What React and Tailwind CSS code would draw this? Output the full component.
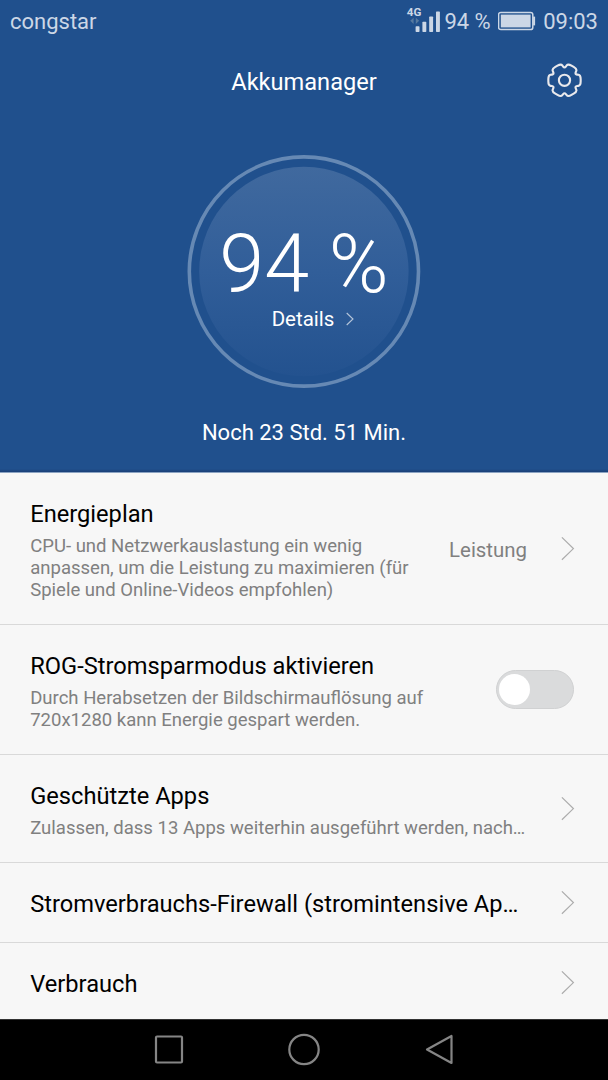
const ROWS = [
  {
    title: "Energieplan",
    text: "CPU- und Netzwerkauslastung ein wenig anpassen, um die Leistung zu maximieren (für Spiele und Online-Videos empfohlen)",
    value: "Leistung",
    height: "h-[153px] pt-px",
    width: "w-[390px] pt-1",
  },
  {
    title: "ROG-Stromsparmodus aktivieren",
    text: "Durch Herabsetzen der Bildschirmauflösung auf 720x1280 kann Energie gespart werden.",
    toggle: true,
    height: "h-[130px]",
    width: "w-[410px] pt-1",
  },
  {
    title: "Geschützte Apps",
    text: "Zulassen, dass 13 Apps weiterhin ausgeführt werden, nach…",
    height: "h-[108px]",
    width: "w-[510px] pt-1 whitespace-nowrap",
  },
  {
    title: "Stromverbrauchs-Firewall (stromintensive Ap…",
    height: "h-[80px]",
    width: "w-[510px] pt-[2px] whitespace-nowrap",
  },
  { title: "Verbrauch", height: "h-[76px] pt-[3px]", width: "w-[400px] pt-[2px]", last: true },
]

// Closed path through the points with softened corners
function softPath(points, cut) {
  const n = points.length
  return points.map(([x, y], i) => {
    const [px, py] = points[(i + n - 1) % n]
    const [nx, ny] = points[(i + 1) % n]
    const ax = x + (px - x) * cut
    const ay = y + (py - y) * cut
    const bx = x + (nx - x) * cut
    const by = y + (ny - y) * cut
    return `${i ? "L" : "M"}${ax} ${ay}Q${x} ${y} ${bx} ${by}`
  }).join("") + "Z"
}

const GEAR_POINTS = [0, 60, 120, 180, 240, 300].flatMap((deg) =>
  [[deg - 18, 17], [deg + 18, 17], [deg + 30, 12]].map(([a, r]) => [
    r * Math.cos((a * Math.PI) / 180),
    r * Math.sin((a * Math.PI) / 180),
  ])
)

function Gear() {
  return (
    <svg width="36" height="36" viewBox="-17.5 -17.3 36 36" fill="none" stroke="#e9e9ec" strokeWidth="2.1">
      <path d={softPath(GEAR_POINTS, 0.38)} />
      <circle r="5.6" />
    </svg>
  )
}

function Chevron() {
  return (
    <svg className="shrink-0" width="14" height="24" viewBox="0.6 0.4 14 24" fill="none" stroke="#acacac" strokeWidth="1.2">
      <path d="M1.5 .8 13 12 1.5 23.2" />
    </svg>
  )
}

function Signal() {
  return (
    <svg width="36" height="30" viewBox="-1.8 -1.3 36 30" fill="#ccd7e6">
      <text x="-1" y="9.1" fontFamily="Roboto" fontSize="11.6" fontWeight="700">4G</text>
      <path d="M5.8 10.5v6.2L2.4 13.5zM8 10.5v6.2l3.4-3.2z" fill="#56799f" />
      <rect x="7.8" y="19" width="3.9" height="5.6" rx=".7" />
      <rect x="14.6" y="14.5" width="3.9" height="10.1" rx=".7" />
      <rect x="21.4" y="9.2" width="3.9" height="15.4" rx=".7" />
      <rect x="28.2" y="4.2" width="3.9" height="20.4" rx=".7" />
    </svg>
  )
}

function Battery() {
  return (
    <svg width="38" height="20" viewBox="0.4 -0.2 38 20" fill="none">
      <rect x="1" y="1.2" width="34.2" height="17.2" rx="2.2" stroke="#ccd7e6" strokeWidth="1.5" />
      <rect x="3.2" y="3.4" width="29.8" height="12.8" fill="#ccd7e6" />
      <path d="M36.5 5.4v8.8" stroke="#ccd7e6" strokeWidth="2" />
    </svg>
  )
}

function StatusBar() {
  return (
    <div className="h-[42px] flex items-center pl-[10px] pr-[10px] text-[22px] text-[#ccd7e6]">
      <span>congstar</span>
      <div className="ml-auto flex items-center">
        <Signal />
        <span className="ml-[2px]">94 %</span>
        <span className="ml-[7.5px]"><Battery /></span>
        <span className="ml-[7px]">09:03</span>
      </div>
    </div>
  )
}

function Gauge() {
  return (
    <div className="relative mt-[35px] mx-auto size-[234px] shrink-0 flex flex-col items-center">
      <svg className="absolute inset-0" width="234" height="234" viewBox="0 0 234 234">
        <defs>
          <linearGradient id="disc" x1="0" y1="0" x2="0" y2="1">
            <stop offset="0" stopColor="#40699e" />
            <stop offset=".5" stopColor="#315e99" />
            <stop offset="1" stopColor="#23528f" />
          </linearGradient>
        </defs>
        <circle cx="116.9" cy="116.5" r="114.6" fill="none" stroke="#6689b4" strokeWidth="3.6" />
        <circle cx="116.9" cy="116.5" r="104.7" fill="url(#disc)" />
      </svg>
      <div className="relative mt-[68px] h-[84px] text-[81px] leading-[84px] font-light whitespace-nowrap">94 %</div>
      <div className="relative flex items-center pl-[18px] text-[20.5px] leading-[24px]">
        Details
        <svg className="ml-3" width="8" height="14" viewBox="0 0 8 14" fill="none" stroke="#b5c5da" strokeWidth="1.1">
          <path d="M.7 1 7 7 .7 13" />
        </svg>
      </div>
    </div>
  )
}

function Row({ title, text, value, toggle, height, width, last }) {
  return (
    <div className={`${height} flex items-center justify-between pl-[30.2px] pr-[33px] ${last ? "" : "border-b border-[#d9d9d9]"}`}>
      <div className={width}>
        <h2 className="text-[23.66px] leading-[28px] text-black">{title}</h2>
        {text && <p className="mt-[7px] text-[18.53px] leading-[22px] text-[#808080]">{text}</p>}
      </div>
      {value && <span className="ml-auto mr-[34px] pt-[3px] text-[20.4px] text-[#808080]">{value}</span>}
      {toggle ? (
        <div className="w-[78px] h-[39px] mr-px shrink-0 rounded-full bg-[#dadbdc] border border-[#d0d1d2] flex items-center pl-[2px]">
          <div className="size-[31px] rounded-full bg-white" />
        </div>
      ) : (
        <Chevron />
      )}
    </div>
  )
}

export default function App() {
  return (
    <div className="w-[608px] h-[1080px] overflow-hidden flex flex-col font-['Roboto',sans-serif] bg-[#f7f7f7]">
      <header className="h-[473px] -mb-px shrink-0 flex flex-col bg-[#20508d] border-b border-[#8ba3c2] text-white">
        <StatusBar />
        <div className="h-[78px] grid grid-cols-[1fr_auto_1fr] items-center">
          <h1 className="col-start-2 pt-[3px] text-[23.6px]">Akkumanager</h1>
          <div className="justify-self-end pr-[25px]"><Gear /></div>
        </div>
        <Gauge />
        <p className="mt-[29px] text-center text-[22px] leading-[30px]">Noch 23 Std. 51 Min.</p>
        <div className="mt-auto h-[3px] bg-linear-to-b from-[#20508d] to-[#1a3f77]" />
      </header>

      <main>
        {ROWS.map((row) => <Row key={row.title} {...row} />)}
      </main>

      <nav className="h-[61px] shrink-0 bg-black border-t border-[#333] flex items-center pl-[153px]">
        <svg width="304" height="34" viewBox="0 0 304 34" fill="none" stroke="#858585" strokeWidth="2.2" strokeLinejoin="round">
          <rect x="3" y="3.5" width="26" height="26" rx="1" />
          <circle cx="151" cy="16.5" r="14.7" />
          <path d="M298.5 3v27L274 16.5z" />
        </svg>
      </nav>
    </div>
  )
}
